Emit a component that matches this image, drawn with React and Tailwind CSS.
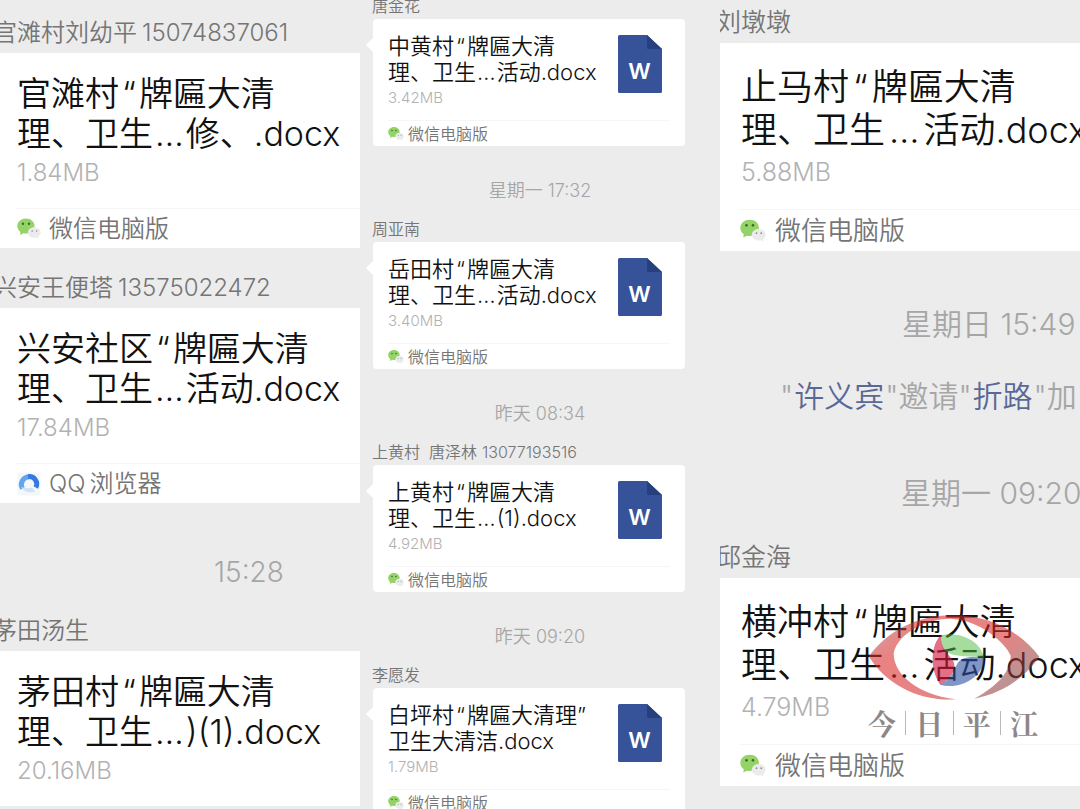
import React from "react";
import clsx from "clsx";

const sizes = {
  sm: {
    name: "pl-3 text-[16px] leading-[28px] -mb-px",
    card: "ml-[13px] mr-[35px] rounded-[4px]",
    body: "pl-[15px] pr-[23px] pt-[14px] pb-[9px]",
    title: "text-[22px] leading-[26px]",
    size: "text-[15px] leading-[26px]",
    footer: "mx-[15px] h-[26px] gap-1 text-[16px]",
    icon: "h-[16px] w-[16px]",
    quote: "mx-[2px]",
    dots: "mx-px",
  },
  md: {
    name: "-ml-[7px] text-[24px] leading-[42px] -mb-px",
    card: "",
    body: "pl-[17px] pt-[21px] pb-4",
    title: "text-[34px] leading-[40px]",
    size: "text-[24px] leading-[38px]",
    footer: "ml-[17px] h-[40px] gap-2 text-[24px]",
    icon: "h-[24px] w-[24px]",
    quote: "mx-[3px]",
    dots: "mx-[2px]",
  },
  lg: {
    name: "-ml-[4px] text-[25px] leading-[42px]",
    card: "",
    body: "pl-[21px] pt-[23px] pb-[17px]",
    title: "text-[36px] leading-[43px]",
    size: "text-[25px] leading-[40px]",
    footer: "ml-[20px] h-[42px] gap-[9px] text-[26px]",
    icon: "h-[26px] w-[26px]",
    quote: "mx-1",
    dots: "mx-1",
  },
};

function WechatIcon({ className }) {
  return (
    <svg viewBox="0 0 24 24" className={className} aria-hidden="true">
      <path
        d="M9 1.500C4.200 1.500 0.300 4.700 0.300 9c0 2.500 1.200 4.500 3.200 5.900L3 18l3.400-1.700c.9.2 1.700.3 2.600.3 4.800 0 8.500-3.300 8.500-7.600S13.800 1.500 9 1.500z"
        fill="#93d368"
      />
      <circle cx="6" cy="6.800" r="1.200" fill="#3d6b2a" />
      <circle cx="12" cy="6.800" r="1.200" fill="#3d6b2a" />
      <path
        d="M17.300 10.200c-3.700 0-6.400 2.300-6.400 5.300s2.700 5.300 6.400 5.300c.7 0 1.400-.1 2-.3l2.500 1.300-.5-2.200c1.500-1 2.400-2.500 2.400-4.100 0-3-2.700-5.300-6.400-5.300z"
        fill="#ebebeb"
      />
      <circle cx="15.200" cy="14" r=".8" fill="#8a8a8a" />
      <circle cx="19.600" cy="14" r=".8" fill="#8a8a8a" />
    </svg>
  );
}

function BrowserIcon({ className }) {
  return (
    <svg viewBox="0 0 24 24" className={className} aria-hidden="true">
      <rect x="0.500" y="0.500" width="23" height="23" rx="2" fill="#f4f6fa" />
      <path
        d="M5.500 16.500A7.800 7.800 0 0 1 12 4.700"
        fill="none"
        stroke="#5fa6ee"
        strokeWidth="5"
      />
      <path
        d="M11 4.700A7.400 7.400 0 0 1 18.800 15.500"
        fill="none"
        stroke="#3478e0"
        strokeWidth="5"
      />
      <path d="M4 15c3 5 9 6.500 14 4.500l-3-4c-4 1-7 .5-11-.5z" fill="#cfe2f8" />
    </svg>
  );
}

function WordIcon() {
  return (
    <svg viewBox="0 0 44 58" className="mt-0.5 h-[58px] w-[44px] shrink-0" role="img" aria-label="Word">
      <path d="M1.500 0H29l15 14v42.500a1.500 1.500 0 0 1-1.500 1.500h-41A1.500 1.500 0 0 1 0 56.500v-55A1.500 1.500 0 0 1 1.500 0z" fill="#36539a" />
      <path d="M29 0l15 14H30.500a1.500 1.500 0 0 1-1.500-1.500z" fill="#273f7c" />
      <text x="21.500" y="44" textAnchor="middle" fontSize="22" fontWeight="600" fill="#fff">
        W
      </text>
    </svg>
  );
}

function Sender({ size, name, phone }) {
  return (
    <div className={clsx("whitespace-pre text-[#757575]", sizes[size].name)}>
      {name}
      {phone && <span className="ml-[5px]">{phone}</span>}
    </div>
  );
}

// quotes and the ellipsis get some air between the Chinese glyphs
function TitleLine({ text, quote, dots }) {
  return text.split(/([“…])/).map((part, i) =>
    part === "“" || part === "…" ? (
      <span key={i} className={part === "“" ? quote : dots}>
        {part}
      </span>
    ) : (
      part
    )
  );
}

function FileCard({ size, title, fileSize, source = "wechat", showFooter = true, children }) {
  const s = sizes[size];
  return (
    <article className={clsx("relative bg-white", s.card)}>
      {size === "sm" && (
        <span className="absolute -left-[5px] top-[21px] h-[10px] w-[10px] rotate-45 rounded-[1px] bg-white" />
      )}
      <div className={clsx("flex items-start justify-between", s.body)}>
        <div className="whitespace-nowrap">
          <h3 className={clsx("font-[350] text-[#111]", s.title)}>
            <TitleLine text={title[0]} quote={s.quote} dots={s.dots} />
            <br />
            <TitleLine text={title[1]} quote={s.quote} dots={s.dots} />
          </h3>
          <p className={clsx("text-[#b2b2b2]", s.size)}>{fileSize}</p>
        </div>
        {size === "sm" && <WordIcon />}
      </div>
      {showFooter && (
        <footer
          className={clsx(
            "flex items-center whitespace-nowrap border-t border-[#f6f6f6] text-[#757575]",
            s.footer
          )}
        >
          {source === "qq" ? <BrowserIcon className={s.icon} /> : <WechatIcon className={s.icon} />}
          {source === "qq" ? (
            <span>
              QQ<span className="ml-1">浏览器</span>
            </span>
          ) : (
            <span>微信电脑版</span>
          )}
        </footer>
      )}
      {children}
    </article>
  );
}

function Watermark() {
  return (
    <div className="absolute left-[145px] top-8 w-[180px]">
      <svg viewBox="0 0 540 285" className="w-full" aria-hidden="true">
        <defs>
          <linearGradient id="eye" x1="0" y1="0" x2="1" y2="0.600">
            <stop offset="0" stopColor="#d92323" />
            <stop offset="0.120" stopColor="#b84a4a" />
            <stop offset="0.300" stopColor="#d92323" />
            <stop offset="0.700" stopColor="#d42626" />
            <stop offset="0.950" stopColor="#8c4040" />
          </linearGradient>
        </defs>
        <path
          d="M12 140C50 85 130 17 262 16C380 15 470 70 523 140C475 208 410 250 328 266C400 225 437 185 437 137C420 95 340 30 262 27C210 22 100 60 86 130C86 195 160 255 272 268C160 275 60 220 12 140Z"
          fill="url(#eye)"
          fillOpacity="0.570"
        />
        <path d="M228 75C285 65 345 90 357 143C325 138 270 142 245 126C228 112 226 92 228 75Z" fill="#4fb93f" fillOpacity="0.500" />
        <path d="M228 75C196 105 194 180 226 224C255 210 275 180 266 155C250 130 225 115 228 75Z" fill="#d4163c" fillOpacity="0.620" />
        <path d="M357 143C360 195 290 242 224 224C255 210 262 195 275 165C285 140 315 138 357 143Z" fill="#2c50a0" fillOpacity="0.600" />
      </svg>
      <div className="flex items-center justify-between pl-[3px] pr-[7px] font-[Noto_Serif_CJK_SC,Noto_Sans_CJK_SC,serif] text-[28px] font-bold leading-[36px] text-[#8f8787]">
        <span>今</span>
        <span className="h-6 w-px bg-[#bdb8b8]" />
        <span>日</span>
        <span className="h-6 w-px bg-[#bdb8b8]" />
        <span>平</span>
        <span className="h-6 w-px bg-[#bdb8b8]" />
        <span>江</span>
      </div>
    </div>
  );
}

const middleChat = [
  {
    name: "唐金花",
    title: ["中黄村“牌匾大清", "理、卫生…活动.docx"],
    fileSize: "3.42MB",
    time: "星期一 17:32",
  },
  {
    name: "周亚南",
    title: ["岳田村“牌匾大清", "理、卫生…活动.docx"],
    fileSize: "3.40MB",
    time: "昨天 08:34",
  },
  {
    name: "上黄村  唐泽林",
    phone: "13077193516",
    title: ["上黄村“牌匾大清", "理、卫生…(1).docx"],
    fileSize: "4.92MB",
    time: "昨天 09:20",
  },
  {
    name: "李愿发",
    title: ["白坪村“牌匾大清理”", "卫生大清洁.docx"],
    fileSize: "1.79MB",
  },
];

export default function App() {
  return (
    <main className="grid h-screen grid-cols-3 overflow-hidden bg-[#ececec] font-[Inter,Noto_Sans_CJK_SC,sans-serif] font-[350]">
      <section className="min-w-0 overflow-hidden pt-3">
        <Sender size="md" name="官滩村刘幼平" phone="15074837061" />
        <FileCard size="md" title={["官滩村“牌匾大清", "理、卫生…修、.docx"]} fileSize="1.84MB" />
        <div className="mt-[19px]">
          <Sender size="md" name="兴安王便塔" phone="13575022472" />
        </div>
        <FileCard
          size="md"
          title={["兴安社区“牌匾大清", "理、卫生…活动.docx"]}
          fileSize="17.84MB"
          source="qq"
        />
        <time className="mb-[18px] mt-[49px] block pl-[214px] text-[28px] leading-[40px] text-[#a6a6a6]">15:28</time>
        <Sender size="md" name="茅田汤生" />
        <FileCard
          size="md"
          title={["茅田村“牌匾大清", "理、卫生…)(1).docx"]}
          fileSize="20.16MB"
          showFooter={false}
        />
      </section>

      <section className="min-w-0 overflow-hidden">
        <div className="-mt-2">
          {middleChat.map((item) => (
            <div key={item.name}>
              <Sender size="sm" name={item.name} phone={item.phone} />
              <FileCard size="sm" title={item.title} fileSize={item.fileSize} />
              {item.time && (
                <time className="mb-[11px] mt-8 block text-center text-[18px] leading-[26px] text-[#a6a6a6]">
                  {item.time}
                </time>
              )}
            </div>
          ))}
        </div>
      </section>

      <section className="min-w-0 overflow-hidden pt-px">
        <Sender size="lg" name="刘墩墩" />
        <FileCard size="lg" title={["止马村“牌匾大清", "理、卫生…活动.docx"]} fileSize="5.88MB" />
        <div className="whitespace-nowrap text-[30px] leading-[42px] text-[#a6a6a6]">
          <time className="mt-[52px] block pl-[182px]">星期日 15:49</time>
          <p className="mt-[30px] pl-[60px]">
            "<a href="#" className="mx-px text-[#5a6896]">许义宾</a>"邀请"
            <a href="#" className="mx-px text-[#5a6896]">折路</a>"加
          </p>
          <time className="mb-[22px] mt-[55px] block pl-[181px]">星期一 09:20</time>
        </div>
        <Sender size="lg" name="邱金海" />
        <FileCard size="lg" title={["横冲村“牌匾大清", "理、卫生…活动.docx"]} fileSize="4.79MB">
          <Watermark />
        </FileCard>
      </section>
    </main>
  );
}
